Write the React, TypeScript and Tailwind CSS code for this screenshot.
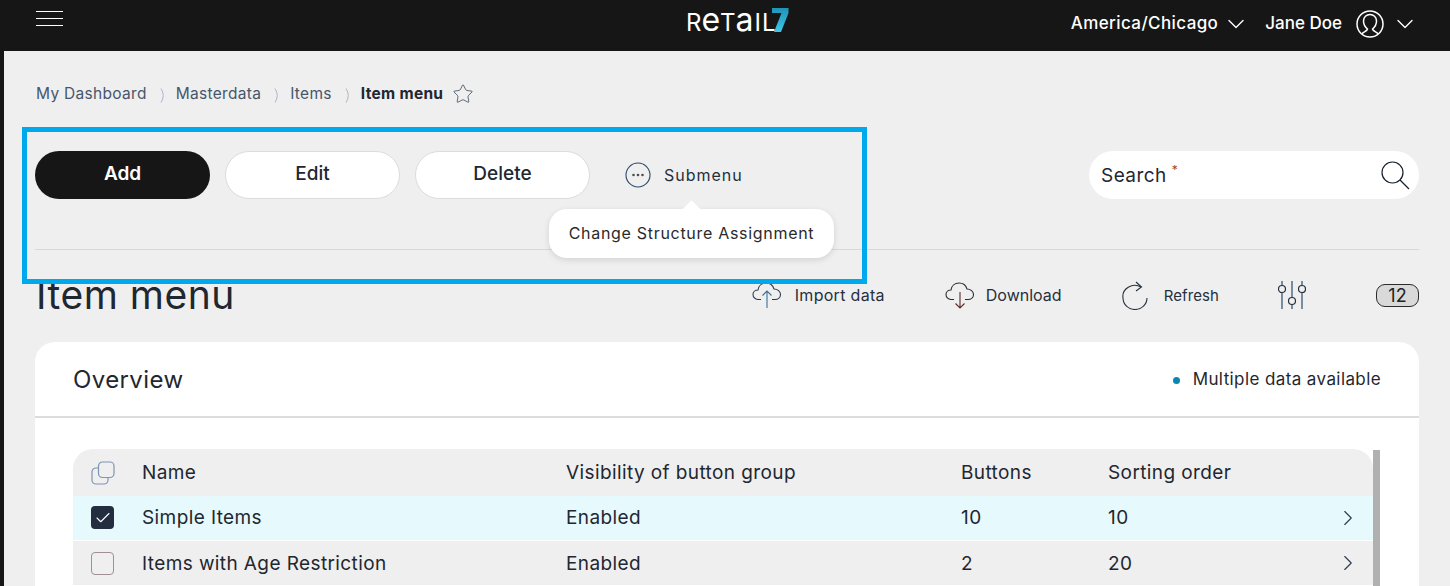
import { ChevronDown, ChevronRight, Check, Star } from 'lucide-react'

const font = 'font-["Inter","Liberation_Sans",sans-serif]'

const crumbs = ['My Dashboard', 'Masterdata', 'Items']

const rows = [
  { name: 'Simple Items', visible: 'Enabled', buttons: '10', order: '10', checked: true },
  { name: 'Items with Age Restriction', visible: 'Enabled', buttons: '2', order: '20', checked: false },
]

function Logo() {
  return (
    <div className="ml-[623px] flex items-start">
      <span className="flex items-baseline text-[24px] leading-[40px] font-normal text-white">
        R<span className="text-[32px] leading-[40px]">e</span>T<span className="text-[32px] leading-[40px]">a</span>
        <span className="ml-[1px]">I</span>
        <span className="ml-[1px]">L</span>
      </span>
      <svg width="18" height="24" viewBox="0 0 18 24" className="-ml-[5px] mt-[8px]">
        <defs>
          <linearGradient id="seven" x1="0" y1="0" x2="0" y2="1">
            <stop offset="0" stopColor="#1f93b8" />
            <stop offset="1" stopColor="#3fc6e8" />
          </linearGradient>
        </defs>
        <path d="M1 0h16.500v5L10 24H3l7.500-19H1z" fill="url(#seven)" />
      </svg>
    </div>
  )
}

function UserIcon() {
  return (
    <svg width="28" height="28" viewBox="0 0 28 28" fill="none" stroke="white" strokeWidth="1.500">
      <circle cx="14" cy="14" r="13" />
      <path d="M6 24c.5-2 5-2.500 5.500-5-2.500-2-4-4.500-4-8 0-4 3-6.500 6.500-6.500s6.500 2.500 6.500 6.500c0 3.500-1.500 6-4 8 .5 2.500 5 3 5.500 5" />
    </svg>
  )
}

function CloudUp() {
  return (
    <svg width="30" height="28" viewBox="0 0 30 28" fill="none" stroke="#2b3a4d" strokeWidth="1.100">
      <path d="M9 18.500H6C3 18.500 1 16 1 13.500 1 11 3 9 6 9 6.500 4.500 10 2 14 2c4 0 7 2.500 8 6 3.500 0 6.500 2.500 6.500 5.500s-2.500 5-5.500 5h-3" />
      <path d="M15 27V10M10.500 14.500 15 10l4.500 4.500" stroke="#3d6f96" />
    </svg>
  )
}

function CloudDown() {
  return (
    <svg width="30" height="28" viewBox="0 0 30 28" fill="none" stroke="#2b2b33" strokeWidth="1.100">
      <path d="M9 18.500H6C3 18.500 1 16 1 13.500 1 11 3 9 6 9 6.500 4.500 10 2 14 2c4 0 7 2.500 8 6 3.500 0 6.500 2.500 6.500 5.500s-2.500 5-5.500 5h-3" />
      <path d="M15 11v16M10.500 22.500 15 27l4.500-4.500" stroke="#5e2a2a" />
    </svg>
  )
}

function RefreshIcon() {
  return (
    <svg width="27" height="29" viewBox="0 0 27 29" fill="none" stroke="#26303d" strokeWidth="1.100">
      <path d="M19 6A12 11 0 0 0 1 17a12 11.500 0 0 0 24 0" />
      <path d="M14 1l5.500 5-5.500 4" />
    </svg>
  )
}

function Sliders() {
  return (
    <svg width="28" height="29" viewBox="0 0 28 29" fill="none" stroke="#2b4a6b" strokeWidth="1.200">
      <path d="M4 0v4.500M4 11.500V28M14 0v16.500M14 23.500V28M24 0v4.500M24 11.500V28" />
      <circle cx="4" cy="8" r="3.500" stroke="#26303d" />
      <circle cx="14" cy="20" r="3.500" stroke="#26303d" />
      <circle cx="24" cy="8" r="3.500" stroke="#26303d" />
    </svg>
  )
}

function ActionLink({ icon, label, gap, className, textClass }: { icon: React.ReactNode; label: string; gap: string; className: string; textClass: string }) {
  return (
    <div className={`flex items-center ${gap} ${className}`}>
      {icon}
      <span className={`text-[#26303d] ${textClass}`}>{label}</span>
    </div>
  )
}

export default function App() {
  return (
    <div className={`${font} relative h-[586px] w-[1450px] overflow-hidden bg-[#161616]`}>
      <header className="flex h-[51px] items-start">
        <div className="ml-[36px] mt-[11px] flex w-[27px] flex-col gap-[6px]">
          <div className="h-px bg-white" />
          <div className="h-px bg-white" />
          <div className="h-px bg-white" />
        </div>
        <Logo />
        <div className="ml-auto mt-[10px] flex items-center pr-[31px] text-white">
          <span className="text-[17px] font-medium tracking-[0.4px]">America/Chicago</span>
          <ChevronDown size={28} strokeWidth={1.200} className="ml-[4px]" />
          <span className="ml-[15px] text-[17px] font-medium">Jane Doe</span>
          <div className="ml-[14px]">
            <UserIcon />
          </div>
          <ChevronDown size={28} strokeWidth={1.200} className="ml-[7px]" />
        </div>
      </header>

      <main className="ml-[4px] h-[535px] bg-[#efefef] pl-[31px] pr-[31px]">
        {/* Breadcrumb */}
        <nav className="flex h-[53px] items-center pl-[1px] pt-[33px] text-[15.500px] tracking-[0.3px] text-[#46566b]">
          {crumbs.map((c) => (
            <div key={c} className="flex items-center">
              <span>{c}</span>
              <svg width="5" height="15" viewBox="0 0 5 15" fill="none" stroke="#a9b8c8" className="ml-[13px] mr-[11px] mt-[2px]">
                <path d="M1 0.500Q5.500 7.500 1 14.500" />
              </svg>
            </div>
          ))}
          <span className="font-bold text-[#1f2730]">Item menu</span>
          <Star size={22} strokeWidth={0.800} className="ml-[9px] text-[#2b3a4d]" />
        </nav>

        {/* Toolbar */}
        <div className="mt-[47px] flex h-[48px] items-center">
          <button className="h-[48px] w-[175px] rounded-full bg-[#161616] pb-[1px] text-[19px] font-semibold text-white">Add</button>
          <button className="ml-[15px] h-[48px] w-[175px] rounded-full border border-[#dcdcdc] bg-white pb-[1px] text-[19px] font-medium text-[#1f2730]">Edit</button>
          <button className="ml-[15px] h-[48px] w-[175px] rounded-full border border-[#dcdcdc] bg-white pb-[1px] text-[19px] font-medium text-[#1f2730]">Delete</button>
          <div className="relative ml-[35px] flex items-center gap-[13px]">
            <svg width="26" height="26" viewBox="0 0 26 26" fill="none">
              <circle cx="13" cy="13" r="12" stroke="#2b4a6b" strokeWidth="1.100" />
              <circle cx="8.500" cy="13" r="1.300" fill="#4a4f57" />
              <circle cx="13" cy="13" r="1.300" fill="#4a4f57" />
              <circle cx="17.500" cy="13" r="1.300" fill="#4a4f57" />
            </svg>
            <span className="text-[16px] tracking-[1px] text-[#26303d]">Submenu</span>
            <div className="absolute left-[-76px] top-[47px] z-10 flex h-[49px] w-[285px] items-center justify-center rounded-[18px] bg-white pb-[2px] text-[16px] tracking-[0.7px] text-[#2a2a2a] shadow-[0_2px_6px_rgba(0,0,0,0.12)]">
              <span>Change Structure Assignment</span>
              <div className="absolute left-[136px] top-[-6px] size-[13px] rotate-45 bg-white" />
            </div>
          </div>
          <div className="ml-auto flex h-[48px] w-[330px] items-center rounded-full bg-white pl-[12px] pr-[9px]">
            <span className="pt-[2px] text-[19px] tracking-[0.45px] text-[#1f2730]">Search</span>
            <span className="mb-[10px] ml-[5px] text-[12px] text-[#a5451f]">*</span>
            <svg width="30" height="30" viewBox="0 0 30 30" fill="none" stroke="#16202b" strokeWidth="1.200" className="ml-auto">
              <circle cx="12.500" cy="12.500" r="10.500" />
              <path d="M20 20l9 9" />
            </svg>
          </div>
        </div>

        <div className="mt-[50px] h-px bg-[#d8d8d8]" />

        {/* Title row */}
        <div className="flex h-[92px] items-start">
          <h1 className="ml-[1px] mt-[22px] text-[39px] font-normal leading-[46px] tracking-[0.5px] text-[#1f2730]">Item menu</h1>
          <div className="ml-auto flex items-start pt-[31px]">
            <ActionLink icon={<CloudUp />} label="Import data" gap="gap-[13px]" className="mr-[60px]" textClass="text-[16px] tracking-[0.3px]" />
            <ActionLink icon={<CloudDown />} label="Download" gap="gap-[11px]" className="mr-[60px]" textClass="text-[16px]" />
            <ActionLink icon={<RefreshIcon />} label="Refresh" gap="gap-[15px]" className="mr-[59px]" textClass="pt-[2px] text-[15px] tracking-[0.1px]" />
            <Sliders />
            <div className="ml-[70px] mt-[3px] flex h-[23px] w-[43px] items-center justify-center rounded-[9px] border border-[#2b2b2b] bg-[#d9d9d9] text-[18px] text-[#222]">12</div>
          </div>
        </div>

        {/* Card */}
        <section className="h-[300px] rounded-t-[20px] bg-white">
          <div className="flex h-[76px] items-center border-b-2 border-[#dcdcdc] px-[38px]">
            <h2 className="pt-[2px] text-[24px] font-normal tracking-[0.4px] text-[#1f2730]">Overview</h2>
            <div className="ml-auto flex items-center gap-[13px] pt-[2px] text-[17px] tracking-[0.4px] text-[#1f2730]">
              <div className="size-[7px] rounded-full bg-[#0b87ad]" />
              Multiple data available
            </div>
          </div>

          <div className="ml-[38px] mt-[31px] flex w-[1308px]">
            <div className="w-[1300px] text-[19px] tracking-[0.4px] text-[#1f2730]">
              <div className="grid h-[47px] grid-cols-[69px_424px_395px_147px_1fr] items-center rounded-t-[20px] bg-[#efefef]">
                <svg width="24" height="24" viewBox="0 0 24 24" fill="none" stroke="#7d95b3" strokeWidth="1.200" className="ml-[18px]">
                  <rect x="7.500" y="1" width="15.500" height="15.500" rx="4" />
                  <path d="M7 7H5a4 4 0 0 0-4 4v8a4 4 0 0 0 4 4h8a4 4 0 0 0 4-4v-2" />
                </svg>
                <span className="pt-[2px]">Name</span>
                <span className="pt-[2px]">Visibility of button group</span>
                <span className="pt-[2px]">Buttons</span>
                <span className="pt-[2px]">Sorting order</span>
              </div>
              {rows.map((r) => (
                <div
                  key={r.name}
                  className={`grid h-[45px] grid-cols-[69px_424px_395px_147px_1fr] items-center border-b border-white ${r.checked ? 'bg-[#e6f9fd] pb-[1px]' : 'bg-[#efefef]'}`}
                >
                  {r.checked ? (
                    <div className="ml-[18px] flex size-[23px] items-center justify-center rounded-[4px] bg-[#222d40]">
                      <Check size={18} strokeWidth={1.500} className="text-white" />
                    </div>
                  ) : (
                    <div className="ml-[18px] size-[23px] rounded-[4px] border border-[#a28f95]" />
                  )}
                  <span className="pt-[2px]">{r.name}</span>
                  <span className="pt-[2px]">{r.visible}</span>
                  <span className="pt-[2px]">{r.buttons}</span>
                  <div className="flex items-center justify-between pr-[12px]">
                    <span className="pt-[2px]">{r.order}</span>
                    <ChevronRight size={26} strokeWidth={1} className="text-[#2b3a4d]" />
                  </div>
                </div>
              ))}
            </div>
            <div className="mt-px h-[140px] w-[7px] bg-[#b0b0b0]" />
          </div>
        </section>
      </main>

      {/* highlight frame */}
      <div className="absolute left-[22px] top-[127px] h-[157px] w-[845px] border-[5px] border-[#00a8ec]" />
    </div>
  )
}
